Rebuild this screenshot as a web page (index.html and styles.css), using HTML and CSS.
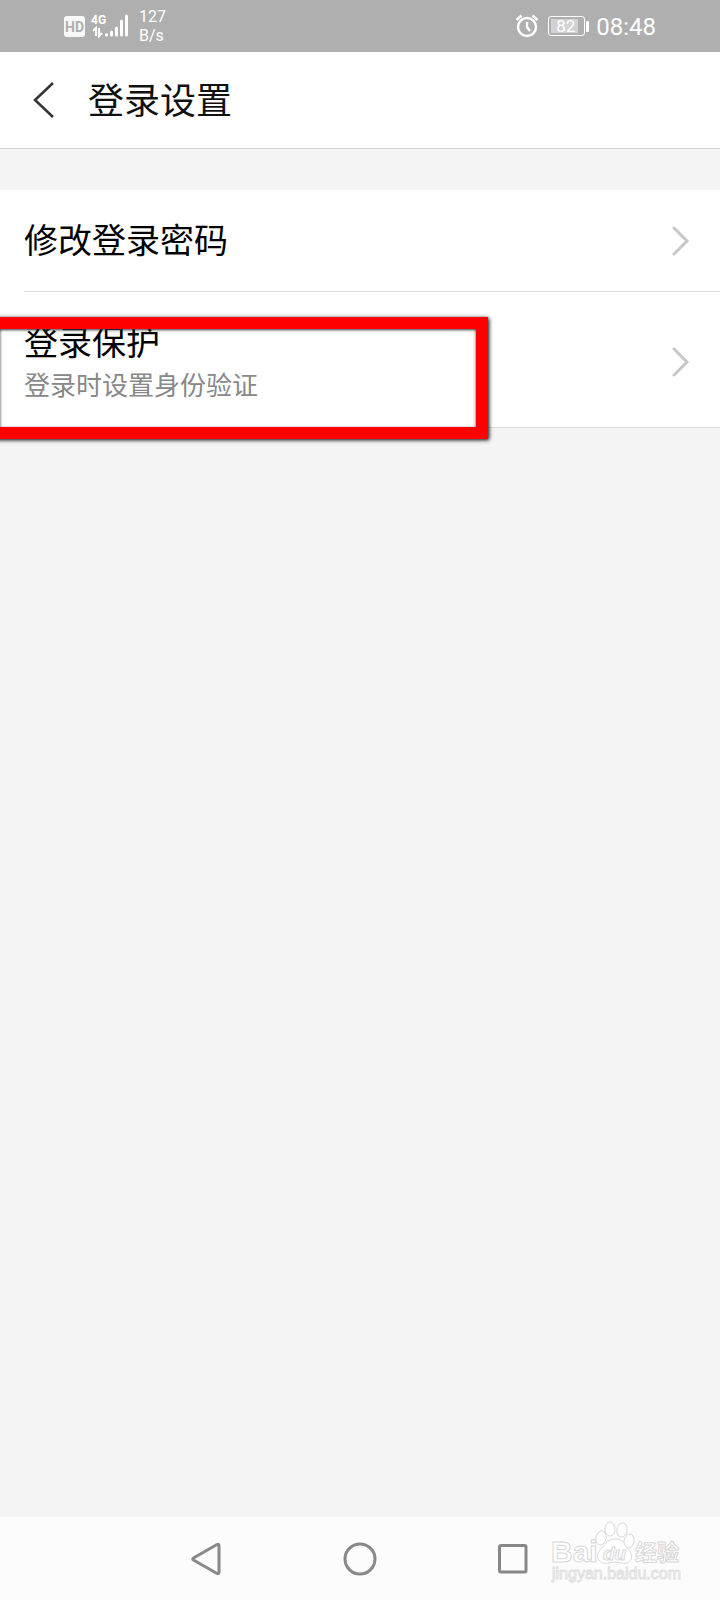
FILE: index.html
```html
<!DOCTYPE html>
<html lang="zh-CN">
<head>
    <meta charset="UTF-8">
    <meta name="viewport" content="width=device-width, initial-scale=1.0">
    <title>登录设置</title>
    <link rel="stylesheet" href="styles.css">
</head>
<body>
    <div class="status-bar">
        <span class="hd">HD</span>
        <svg class="signal" width="38" height="26" viewBox="0 0 38 26">
            <text class="network" x="0" y="11">4G</text>
            <path d="M5 23V15L2 18M8 15V23L11 20" fill="none" stroke="#fff" stroke-width="2"/>
            <path d="M15.500 21.500v.5M20.500 19v3M25.500 15v7M30.500 8v14M35.500 3v19" stroke="#fff" stroke-width="3" stroke-linecap="round"/>
        </svg>
        <div class="speed">127<br>B/s</div>
        <div class="status-right">
            <svg width="24" height="24" viewBox="0 0 24 24" fill="none" stroke="#fff" stroke-width="2.400">
                <circle cx="12" cy="13" r="9"/>
                <path d="M12 8v5l3 4M1.500 6L6.500 1.500M17.500 1.500l5 4.500"/>
            </svg>
            <div class="battery"><span class="level">82</span></div>
            <span class="time">08:48</span>
        </div>
    </div>
    <header class="header">
        <button class="back" aria-label="返回">
            <svg width="22" height="36" viewBox="0 0 22 36" fill="none" stroke="#333" stroke-width="2.500">
                <path d="M20 1L2 18l18 17"/>
            </svg>
        </button>
        <h1>登录设置</h1>
    </header>
    <main class="content">
        <div class="list">
            <a class="row" href="#password">
                <span class="row-title">修改登录密码</span>
                <svg class="arrow" width="18" height="30" viewBox="0 0 18 30"><path d="M2 2l13 13L2 28"/></svg>
            </a>
            <a class="row row-tall" href="#protect">
                <span>
                    <span class="row-title">登录保护</span>
                    <span class="row-desc">登录时设置身份验证</span>
                </span>
                <svg class="arrow" width="18" height="30" viewBox="0 0 18 30"><path d="M2 2l13 13L2 28"/></svg>
            </a>
            <div class="highlight"></div>
        </div>
    </main>
    <nav class="nav-bar">
        <button aria-label="后退">
            <svg width="34" height="34" viewBox="0 0 34 34"><path d="M27 2.500Q29 1.500 29 4v26Q29 32.500 27 31.500L3.500 18Q2 17 3.500 16z"/></svg>
        </button>
        <button aria-label="主页">
            <svg width="34" height="34" viewBox="0 0 34 34"><circle cx="17" cy="17" r="15"/></svg>
        </button>
        <button aria-label="最近任务">
            <svg width="34" height="34" viewBox="0 0 34 34"><rect x="3.500" y="3.500" width="26.500" height="26.500" rx="1.500"/></svg>
        </button>
        <svg class="watermark" width="136" height="68" viewBox="0 0 136 68">
            <text class="bai" x="2" y="40">Bai</text>
            <ellipse cx="52" cy="16" rx="5" ry="7" transform="rotate(15 52 16)"/>
            <ellipse cx="61" cy="7" rx="5" ry="7"/>
            <ellipse cx="73" cy="8" rx="5" ry="7" transform="rotate(10 73 8)"/>
            <ellipse cx="80" cy="19" rx="5" ry="7" transform="rotate(10 80 19)"/>
            <path d="M66 17C57 17 56 24 51 28C45 35 51 43 59 41Q66 39 73 41C82 43 86 34 79 27C75 23 75 17 66 17z"/>
            <text class="du" x="54" y="38">du</text>
            <text class="jingyan" x="86" y="38">经验</text>
            <text class="url" x="3" y="57">jingyan.baidu.com</text>
        </svg>
    </nav>
</body>
</html>
```
FILE: styles.css
```css
* {
    box-sizing: border-box;
}

body {
    margin: 0;
    min-height: 100vh;
    display: flex;
    flex-direction: column;
    background-color: #f4f4f4;
    font-family: "Noto Sans CJK SC", sans-serif;
    color: #000;
}

button {
    padding: 0;
    border: none;
    background: none;
    cursor: pointer;
}

svg {
    display: block;
}

.status-bar {
    display: flex;
    align-items: center;
    height: 52px;
    padding: 0 64px;
    background-color: #afafaf;
    color: #fff;
    font-family: Roboto, sans-serif;
}

.hd {
    width: 21px;
    height: 21px;
    border-radius: 3px;
    background-color: #f8f8f8;
    color: #afafaf;
    font-size: 14px;
    font-weight: bold;
    line-height: 22px;
    text-align: center;
}

.signal {
    margin-left: 6px;
}

.network {
    fill: #fff;
    font-size: 12px;
    font-weight: bold;
}

.speed {
    margin-left: 10px;
    font-size: 16px;
    line-height: 19px;
}

.status-right {
    display: flex;
    align-items: center;
    margin-left: auto;
}

.battery {
    position: relative;
    width: 37px;
    height: 20px;
    margin: 0 11px 0 9px;
    padding: 2px;
    border: 1px solid #fff;
    border-radius: 3px;
}

.battery::after {
    content: "";
    position: absolute;
    top: 4px;
    right: -5px;
    width: 3px;
    height: 11px;
    border-radius: 1px;
    background-color: #fff;
}

.level {
    display: block;
    width: 27px;
    height: 14px;
    padding-left: 5px;
    background-color: #d2d2d2;
    font-size: 17px;
    line-height: 15px;
}

.time {
    padding-top: 2px;
    font-size: 24px;
}

.header {
    display: flex;
    align-items: center;
    height: 97px;
    padding: 0 33px;
    border-bottom: 1px solid #d0d0d0;
    background-color: #fff;
}

h1 {
    margin: 0 0 0 33px;
    padding-bottom: 4px;
    color: #111;
    font-size: 36px;
    font-weight: normal;
    line-height: 48px;
}

.content {
    flex: 1;
    padding-top: 41px;
}

.list {
    position: relative;
    border-bottom: 1px solid #dedede;
    background-color: #fff;
}

.row {
    display: flex;
    align-items: center;
    justify-content: space-between;
    height: 101px;
    margin-left: 24px;
    padding-right: 30px;
    color: #000;
    text-decoration: none;
}

.row + .row {
    border-top: 1px solid #dedede;
}

.row-title {
    display: block;
    margin-bottom: 3px;
    font-size: 34px;
    line-height: 44px;
}

.row-tall {
    height: 136px;
    padding-top: 4px;
}

.row-tall .row-title {
    margin-bottom: 1px;
}

.row-desc {
    display: block;
    color: #888;
    font-size: 26px;
    line-height: 40px;
}

.arrow {
    fill: none;
    stroke: #c7c7c7;
    stroke-width: 3;
    stroke-linecap: round;
}

/* red frame over the second row */
.highlight {
    position: absolute;
    top: 127px;
    left: -12px;
    width: 500px;
    height: 122px;
    border: 12px solid #f00;
    box-shadow: 1px 1px 4px #000, inset 0 1px 3px #333;
}

.nav-bar {
    position: relative;
    display: flex;
    align-items: center;
    justify-content: center;
    gap: 119px;
    height: 83px;
    background-color: #fcfcfc;
}

.nav-bar button svg {
    fill: none;
    stroke: #888;
    stroke-width: 3;
}

.watermark {
    position: absolute;
    right: 35px;
    bottom: 10px;
    overflow: visible;
    fill: #fff;
    stroke: #d8d8d8;
    stroke-width: 1;
    font-family: "Liberation Sans", sans-serif;
}

.bai {
    font-size: 30px;
    font-weight: bold;
}

.du {
    font-size: 19px;
    font-weight: bold;
    font-style: italic;
}

.jingyan {
    font-family: "Noto Sans CJK SC", sans-serif;
    font-size: 22px;
    font-weight: bold;
}

.url {
    stroke: #e0e0e0;
    font-size: 16px;
}
```
